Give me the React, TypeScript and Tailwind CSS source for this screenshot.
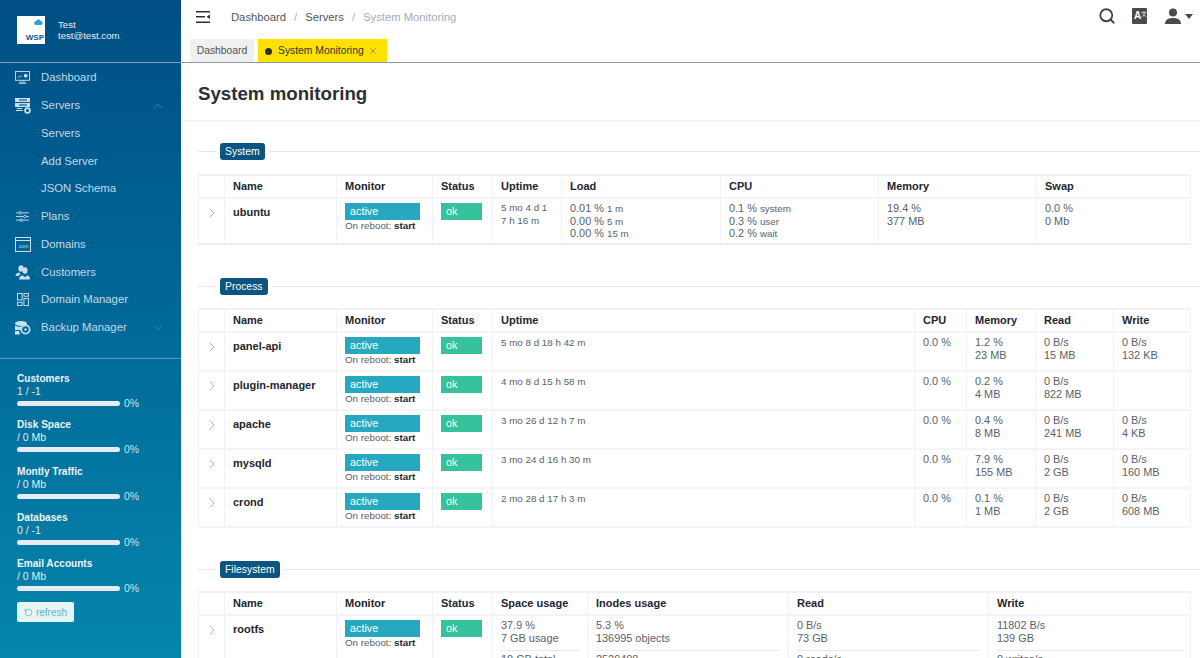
import { ChevronDown, ChevronRight, ChevronUp, RotateCw, Search, X } from "lucide-react";
import type { ReactNode } from "react";

const font = { fontFamily: '"Liberation Sans", Arial, sans-serif' };

const IconMonitor = () => (
  <svg viewBox="0 0 16 14" className="w-[15px] h-[13px]" fill="none" stroke="currentColor">
    <rect x="0.5" y="0.5" width="15" height="9.5" strokeWidth="1" />
    <path d="M2.5 7.5 4.5 5.5 6 6.5 7.5 4.5" strokeWidth="0.8" />
    <circle cx="11.5" cy="5" r="2" fill="currentColor" stroke="none" />
    <path d="M6.5 10v2M9.5 10v2" strokeWidth="1" />
    <path d="M4 13h8" strokeWidth="1.4" />
  </svg>
);
const IconServers = () => (
  <svg viewBox="0 0 16 16" className="w-[16px] h-[16px]" fill="currentColor">
    <path d="M0 0h15v4H0zM0 5h15v4H0z" />
    <path d="M2 10h5v1H2zM1 12h7v1H1z" />
    <rect x="4" y="1.4" width="8" height="1.2" fill="#0a5d90" />
    <rect x="4" y="6.4" width="8" height="1.2" fill="#0a5d90" />
    <circle cx="12.5" cy="12.5" r="2.4" fill="none" stroke="currentColor" strokeWidth="1.8" />
  </svg>
);
const IconPlans = () => (
  <svg viewBox="0 0 14 12" className="w-[13px] h-[11px]" fill="none" stroke="currentColor" strokeWidth="1">
    <path d="M0 2h3M6 2h8M0 6h8M11 6h3M0 10h4M7 10h7" />
    <circle cx="4.5" cy="2" r="1.4" />
    <circle cx="9.5" cy="6" r="1.4" />
    <circle cx="5.5" cy="10" r="1.4" />
  </svg>
);
const IconDomains = () => (
  <svg viewBox="0 0 16 15" className="w-[16px] h-[15px]" fill="none" stroke="currentColor">
    <rect x="0.5" y="0.5" width="15" height="14" />
    <path d="M0.5 3.5h15" />
    <text x="8" y="10.500" textAnchor="middle" fontSize="5" fontStyle="italic" fill="currentColor" stroke="none">.com</text>
  </svg>
);
const IconCustomers = () => (
  <svg viewBox="0 0 15 15" className="w-[15px] h-[15px]" fill="currentColor">
    <ellipse cx="6" cy="3.500" rx="2.600" ry="3.200" />
    <path d="M0.500 11c0-2.500 2-3 3.500-3.500l1.500 1.500C4.500 10 4 10.500 3.500 11z" />
    <ellipse cx="10" cy="5.500" rx="2.500" ry="3.200" />
    <path d="M4 14.500c0-3 2.500-4 3.500-4.300l2.500 2 2.500-2c1 .3 2.500 1.300 2.500 4.300z" />
  </svg>
);
const IconGrid = () => (
  <svg viewBox="0 0 13 14" className="w-[12px] h-[13px]" fill="none" stroke="currentColor">
    <rect x="0.5" y="0.5" width="5" height="7" />
    <rect x="7.500" y="0.5" width="5" height="3" />
    <rect x="0.5" y="10" width="5" height="3.500" />
    <rect x="7.500" y="6" width="5" height="7.500" />
  </svg>
);
const IconBackup = () => (
  <svg viewBox="0 0 16 14" className="w-[16px] h-[14px]" fill="currentColor">
    <ellipse cx="6" cy="2.500" rx="6" ry="2.500" />
    <path d="M0 4.500c2 1.500 6 1.500 8 1L5 9H0zM0 10h4l1 3.500H0z" />
    <circle cx="10.500" cy="8.500" r="4.200" fill="none" stroke="currentColor" strokeWidth="1.800" />
    <circle cx="10.500" cy="8.500" r="1.200" />
  </svg>
);

const nav: { label: string; icon?: ReactNode; arrow?: "up" | "down" }[] = [
  { label: "Dashboard", icon: <IconMonitor /> },
  { label: "Servers", icon: <IconServers />, arrow: "up" },
  { label: "Servers" },
  { label: "Add Server" },
  { label: "JSON Schema" },
  { label: "Plans", icon: <IconPlans /> },
  { label: "Domains", icon: <IconDomains /> },
  { label: "Customers", icon: <IconCustomers /> },
  { label: "Domain Manager", icon: <IconGrid /> },
  { label: "Backup Manager", icon: <IconBackup />, arrow: "down" },
];

const stats = [
  ["Customers", "1 / -1"],
  ["Disk Space", "/ 0 Mb"],
  ["Montly Traffic", "/ 0 Mb"],
  ["Databases", "0 / -1"],
  ["Email Accounts", "/ 0 Mb"],
];

const Sidebar = () => (
  <aside className="w-[181px] shrink-0 h-full bg-gradient-to-b from-[#004e84] to-[#0686ad] flex flex-col text-white">
    <div className="h-[63px] shrink-0 border-b border-[#7fa0bf] flex items-center pl-[17px] pb-[2px] gap-[13px]">
      <div className="w-[28px] h-[28px] bg-white relative">
        <svg viewBox="0 0 12 8" className="absolute top-[3px] right-[2px] w-[9px] h-[6px]" fill="#2a9fd8">
          <path d="M3 8a2.500 2.500 0 0 1-.4-5A3.500 3.500 0 0 1 9 2.500 2.800 2.800 0 0 1 9.500 8z" />
        </svg>
        <span className="absolute bottom-[1px] right-[1px] text-[8px] leading-[11px] font-bold text-[#0a5b92]">WSP</span>
      </div>
      <div className="text-[9.600px] leading-[11px] text-[#e6eef5]">
        <div>Test</div>
        <div>test@test.com</div>
      </div>
    </div>
    <nav className="h-[294px] pt-[1px] shrink-0 border-b border-[#5f9bbf] box-content">
      {nav.map((item, i) => (
        <div key={i} className="h-[27.75px] flex items-center text-[11.350px] text-[#c5dae8] relative">
          <span className="w-[41px] shrink-0 flex justify-center pl-[4px] text-[#c9dfec]">{item.icon}</span>
          <span>{item.label}</span>
          {item.arrow === "up" && <ChevronUp className="absolute left-[151px] w-[14px] h-[14px] text-[#5c9cc0]" strokeWidth={1} />}
          {item.arrow === "down" && <ChevronDown className="absolute left-[151px] w-[14px] h-[14px] text-[#5c9cc0]" strokeWidth={1} />}
        </div>
      ))}
    </nav>
    <div className="pl-[17px] pt-[13px]">
      {stats.map(([title, value]) => (
        <div key={title} className="h-[46.3px] text-[10.500px] leading-[13px]">
          <div className="font-bold text-[10.100px] text-[#eef4f8]">{title}</div>
          <div className="text-[#e0ecf3]">{value}</div>
          <div className="flex items-center gap-[4px] -mt-[1px]">
            <div className="w-[103px] h-[5px] rounded-full bg-[#e6ebf5]" />
            <span className="text-[#cfe1ec]">0%</span>
          </div>
        </div>
      ))}
      <button className="-mt-[1px] w-[57px] h-[20px] bg-[#e6f5f7] rounded-[2px] flex items-center justify-center gap-[3px] text-[10px] text-[#5fb6c6]">
        <RotateCw className="w-[9px] h-[9px] -scale-x-100" />
        refresh
      </button>
    </div>
  </aside>
);

const Topbar = () => (
  <header className="h-[63px] shrink-0 border-b border-[#8e97a8] relative">
    <div className="h-[39px] flex items-start pt-[10px] pl-[15px] pr-[7px]">
      <svg viewBox="0 0 14 12" className="w-[14px] h-[12px] mr-[21px] mt-[1px]" fill="#2b2f36">
        <path d="M0 0h14v1.500H0zM0 5h9v1.500H0zM0 10.500h14V12H0zM14 3.500v4.500L10.500 5.750z" />
      </svg>
      <div className="text-[11.250px] leading-[15px] flex gap-[8px] text-[#50555e]">
        <span>Dashboard</span>
        <span className="text-[#a7adb8]">/</span>
        <span>Servers</span>
        <span className="text-[#a7adb8]">/</span>
        <span className="text-[#a3abbb]">System Monitoring</span>
      </div>
      <div className="ml-auto flex items-center gap-[16px] -mt-[3px]">
        <Search className="w-[18px] h-[18px] text-[#444]" strokeWidth={2.4} />
        <div className="w-[15px] h-[16px] bg-[#4a4a4a] flex items-center pl-[2px] text-[10px] leading-[10px] font-bold text-white rounded-[1px]">
          A<span className="text-[6px] leading-[6px] self-start mt-[3px] font-normal">文</span>
        </div>
        <div className="flex items-center gap-[4px] ml-[2px]">
          <svg viewBox="0 0 16 16" className="w-[16px] h-[16px]" fill="#4a4a4a">
            <circle cx="8" cy="4.500" r="4" />
            <path d="M0 16c0-4 3-6 8-6s8 2 8 6z" />
          </svg>
          <div className="w-0 h-0 border-x-[4px] border-x-transparent border-t-[5px] border-t-[#4a4a4a]" />
        </div>
      </div>
    </div>
    <div className="flex pl-[9px] gap-[4px] text-[10.350px]">
      <div className="h-[23px] w-[64px] pt-[1px] bg-[#f0f0f0] flex items-center justify-center text-[#4d525a]">Dashboard</div>
      <div className="h-[23px] w-[129px] pt-[1px] bg-[#ffe100] flex items-center pl-[7px] text-[#333]">
        <span className="w-[7px] h-[7px] rounded-full bg-[#2b3038] mr-[6px]" />
        System Monitoring
        <X className="w-[10px] h-[10px] ml-[4px] text-[#666]" strokeWidth={1.5} />
      </div>
    </div>
  </header>
);

const SectionTitle = ({ title }: { title: string }) => (
  <div className="flex items-center gap-[4px] h-[17px]">
    <div className="h-px w-[18px] bg-[#e4e7ee]" />
    <span className="h-[17px] px-[5px] bg-[#0b5580] rounded-[3px] text-white text-[10.400px] leading-[17px]">{title}</span>
    <div className="h-px flex-1 bg-[#e4e7ee]" />
  </div>
);

const th = "border-x border-[#f1f2f6] text-left font-bold align-middle text-[11px] text-[#23262f] pl-[8px] pr-0 py-0 whitespace-nowrap";
const td = "border-x border-[#f1f2f6] align-top pl-[8px] pr-0 pt-[4px] text-[#5a5f69] leading-[12.500px]";
const val = "border-x border-[#f1f2f6] align-top pl-[8px] pr-0 pt-[3px] text-[#5a5f69] leading-[12.500px]";

const NameCells = ({ name }: { name: string }) => (
  <>
    <td className={`${td} !pl-0 !pt-[6px]`}>
      <ChevronRight className="w-[16px] h-[16px] mx-auto text-[#8b8f96]" strokeWidth={1} />
    </td>
    <td className={`${td} !pt-[7px] font-bold text-[11px] !text-[#23262f]`}>{name}</td>
    <td className={td}>
      <div className="w-[75px] h-[17px] bg-[#26a9c0] text-white flex items-center pl-[5px] text-[10.800px]">active</div>
      <div className="text-[9.800px] leading-[12px]">
        On reboot: <b className="text-[#23262f]">start</b>
      </div>
    </td>
    <td className={td}>
      <div className="w-[41px] h-[17px] bg-[#36c29a] text-white flex items-center pl-[5px] text-[10.800px]">ok</div>
    </td>
  </>
);

const Lines = ({ lines }: { lines: ReactNode[] }) => (
  <>
    {lines.map((l, i) => (
      <div key={i}>{l}</div>
    ))}
  </>
);

const Table = ({ widths, heads, children }: { widths: number[]; heads: string[]; children: ReactNode }) => (
  <table className="table-fixed border-collapse w-[992px] text-[10.900px] border-y-2 border-t-[#f1f2f6] border-b-[#eceef4]">
    <colgroup>
      {widths.map((w, i) => (
        <col key={i} style={{ width: w }} />
      ))}
    </colgroup>
    <thead>
      <tr className="h-[23px] border-b-2 border-[#f4f5f8]">
        {heads.map((h, i) => (
          <th key={i} className={th}>{h}</th>
        ))}
      </tr>
    </thead>
    <tbody>{children}</tbody>
  </table>
);

const small = (v: string, s: string) => (
  <>
    {v} <span className="text-[9.800px] leading-none">{s}</span>
  </>
);

const processes = [
  ["panel-api", "5 mo 8 d 18 h 42 m", "0.0 %", "1.2 %", "23 MB", "0 B/s", "15 MB", "0 B/s", "132 KB"],
  ["plugin-manager", "4 mo 8 d 15 h 58 m", "0.0 %", "0.2 %", "4 MB", "0 B/s", "822 MB", "", ""],
  ["apache", "3 mo 26 d 12 h 7 m", "0.0 %", "0.4 %", "8 MB", "0 B/s", "241 MB", "0 B/s", "4 KB"],
  ["mysqld", "3 mo 24 d 16 h 30 m", "0.0 %", "7.9 %", "155 MB", "0 B/s", "2 GB", "0 B/s", "160 MB"],
  ["crond", "2 mo 28 d 17 h 3 m", "0.0 %", "0.1 %", "1 MB", "0 B/s", "2 GB", "0 B/s", "608 MB"],
];

export default function App() {
  return (
    <div className="flex w-[1200px] h-[658px] overflow-hidden bg-white" style={font}>
      <Sidebar />
      <main className="flex-1 min-w-0 h-full flex flex-col">
        <Topbar />
        <div className="h-[59px] shrink-0 border-b-2 border-[#f4f5f9] flex items-center pl-[17px] pt-[5px]">
          <h1 className="text-[18.700px] font-bold text-[#2b2f36]">System monitoring</h1>
        </div>
        <div className="pl-[17px] pr-[10px] pt-[21px]">
          <div className="-mr-[10px]"><SectionTitle title="System" /></div>
          <div className="mt-[14px]">
            <Table
              widths={[26, 112, 96, 60, 69, 159, 158, 158, 154]}
              heads={["", "Name", "Monitor", "Status", "Uptime", "Load", "CPU", "Memory", "Swap"]}
            >
              <tr className="h-[46px]">
                <NameCells name="ubuntu" />
                <td className={`${val} text-[9.800px]`}><Lines lines={["5 mo 4 d 1", "7 h 16 m"]} /></td>
                <td className={val}><Lines lines={[small("0.01 %", "1 m"), small("0.00 %", "5 m"), small("0.00 %", "15 m")]} /></td>
                <td className={val}><Lines lines={[small("0.1 %", "system"), small("0.3 %", "user"), small("0.2 %", "wait")]} /></td>
                <td className={val}><Lines lines={["19.4 %", "377 MB"]} /></td>
                <td className={val}><Lines lines={["0.0 %", "0 Mb"]} /></td>
              </tr>
            </Table>
          </div>
          <div className="mt-[33px] -mr-[10px]"><SectionTitle title="Process" /></div>
          <div className="mt-[13px]">
            <Table
              widths={[26, 112, 96, 60, 422, 52, 69, 78, 77]}
              heads={["", "Name", "Monitor", "Status", "Uptime", "CPU", "Memory", "Read", "Write"]}
            >
              {processes.map((p) => (
                <tr key={p[0]} className="h-[39px] border-b-2 border-[#f4f5f8]">
                  <NameCells name={p[0]} />
                  <td className={`${td} text-[9.800px]`}>{p[1]}</td>
                  <td className={val}>{p[2]}</td>
                  <td className={val}><Lines lines={[p[3], p[4]]} /></td>
                  <td className={val}><Lines lines={[p[5], p[6]]} /></td>
                  <td className={val}><Lines lines={[p[7], p[8]]} /></td>
                </tr>
              ))}
            </Table>
          </div>
          <div className="mt-[33px] -mr-[10px]"><SectionTitle title="Filesystem" /></div>
          <div className="mt-[13px]">
            <Table
              widths={[26, 112, 96, 60, 95, 201, 200, 202]}
              heads={["", "Name", "Monitor", "Status", "Space usage", "Inodes usage", "Read", "Write"]}
            >
              <tr>
                <NameCells name="rootfs" />
                <td className={val}>
                  <div className="pr-[8px]">
                    <Lines lines={["37.9 %", "7 GB usage"]} />
                    <div className="border-t border-[#e8eaef] mt-[6px] pt-[2px]">10 GB total</div>
                  </div>
                </td>
                <td className={val}>
                  <div className="pr-[8px]">
                    <Lines lines={["5.3 %", "136995 objects"]} />
                    <div className="border-t border-[#e8eaef] mt-[6px] pt-[2px]">2529408</div>
                  </div>
                </td>
                <td className={val}>
                  <div className="pr-[8px]">
                    <Lines lines={["0 B/s", "73 GB"]} />
                    <div className="border-t border-[#e8eaef] mt-[6px] pt-[2px]">0 reads/s</div>
                  </div>
                </td>
                <td className={val}>
                  <div className="pr-[8px]">
                    <Lines lines={["11802 B/s", "139 GB"]} />
                    <div className="border-t border-[#e8eaef] mt-[6px] pt-[2px]">0 writes/s</div>
                  </div>
                </td>
              </tr>
            </Table>
          </div>
        </div>
      </main>
    </div>
  );
}
